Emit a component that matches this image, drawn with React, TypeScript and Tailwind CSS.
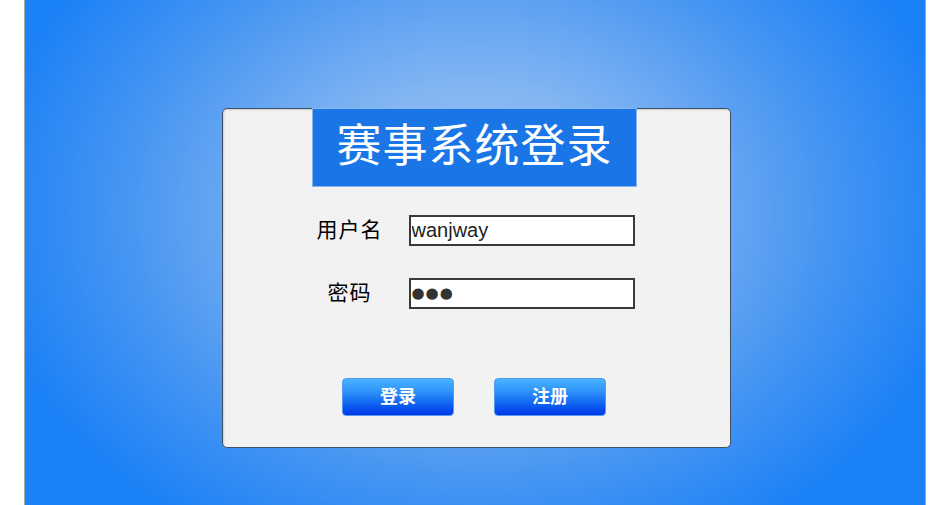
import React, { FunctionComponent, useState } from 'react';

const serif = { fontFamily: '"Liberation Serif", "Noto Sans CJK SC", serif' };

interface FieldProps {
  label: string;
  value: string;
  password?: boolean;
  onChange: (v: string) => void;
}

const Field: FunctionComponent<FieldProps> = ({ label, value, password, onChange }) => (
  <div className="flex flex-row items-center">
    <label
      className="w-[100px] text-center text-[21px] text-black tracking-[1px]"
      style={serif}
    >
      {label}
    </label>
    <input
      className={
        password
          ? 'ml-[9px] h-[31px] w-[226px] border-2 border-[#3a3a3a] bg-white px-[1px] text-[15px] tracking-[1px] text-[#333] outline-none'
          : 'ml-[9px] h-[31px] w-[226px] border-2 border-[#3a3a3a] bg-white px-[1px] text-[20px] text-[#222] outline-none'
      }
      style={{ fontFamily: password ? '"DejaVu Sans", sans-serif' : '"Liberation Sans", Arial, sans-serif' }}
      type="text"
      value={password ? '●'.repeat(value.length) : value}
      onChange={(e) => onChange(e.target.value)}
    />
  </div>
);

const Button: FunctionComponent<{ text: string }> = ({ text }) => (
  <button
    className="h-[38px] w-[112px] rounded-[4px] border border-[#4f9bf5] bg-[linear-gradient(to_bottom,#48b4ff_0%,#2a8cf8_40%,#0a5bf0_75%,#0236e6_100%)] text-[18px] font-bold text-white"
    style={serif}
    type="button"
  >
    {text}
  </button>
);

const App: FunctionComponent = () => {
  const [user, setUser] = useState<string>('wanjway');
  const [pass, setPass] = useState<string>('abc');

  return (
    <div className="min-h-[505px] w-[941px] bg-white">
      <div className="ml-[24px] flex h-[505px] w-[902px] flex-col items-center border-x border-[#a9a9a9] bg-[radial-gradient(ellipse_55%_75%_at_50%_42%,#a9ccf6_0%,#80b4f2_35%,#4896f2_70%,#1b81f6_100%)] pt-[108px]">
        <div className="ml-[2px] flex h-[340px] w-[509px] flex-col items-center rounded-[5px] border border-[#3f5064] bg-[#f2f2f2] shadow-[inset_1px_1px_2px_rgba(0,0,0,0.15)]">
          <div
            className="-mt-px mr-[3px] flex h-[79px] w-[325px] items-center justify-center border border-[#86b4ec] bg-[#1a76e6] text-[45px] tracking-[1px] text-white"
            style={serif}
          >
            赛事系统登录
          </div>
          <div className="mr-[18px] mt-[28px] flex flex-col gap-[31px]">
            <Field label="用户名" value={user} onChange={setUser} />
            <Field label="密码" value={pass} password onChange={setPass} />
          </div>
          <div className="mr-[4px] mt-[69px] flex flex-row gap-[40px]">
            <Button text="登录" />
            <Button text="注册" />
          </div>
        </div>
      </div>
    </div>
  );
};

export default App;
